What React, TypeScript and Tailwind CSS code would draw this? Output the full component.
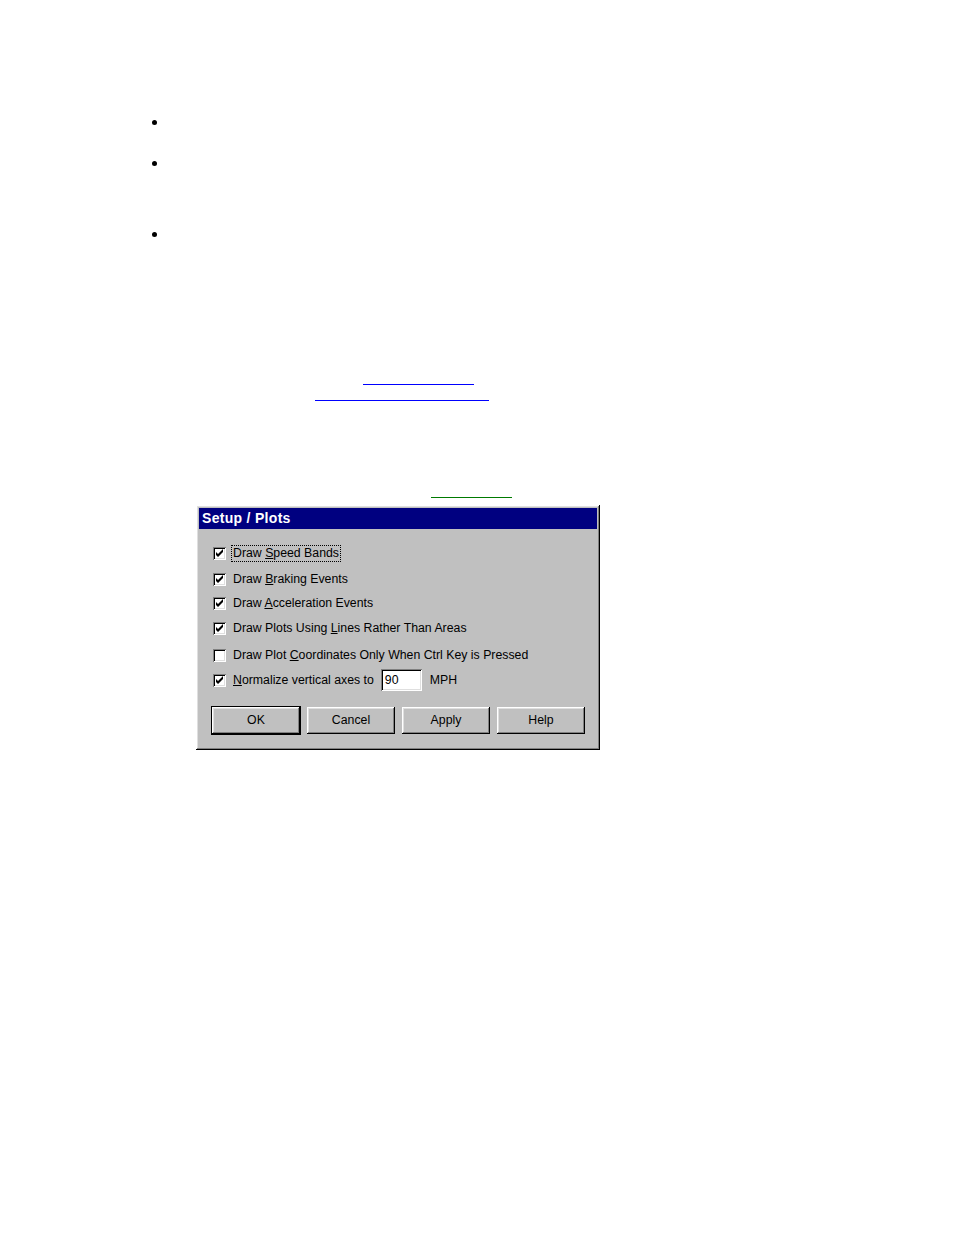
import React from "react";

const font = { fontFamily: '"Liberation Sans", Arial, sans-serif' };

const raised =
  "shadow-[inset_-1px_-1px_0_#000,inset_1px_1px_0_#fff,inset_-2px_-2px_0_#808080,inset_2px_2px_0_#dfdfdf]";
const sunken =
  "shadow-[inset_1px_1px_0_#808080,inset_-1px_-1px_0_#fff,inset_2px_2px_0_#000,inset_-2px_-2px_0_#dfdfdf]";

const Check = ({ checked }: { checked: boolean }) => (
  <div className={`w-[13px] h-[13px] bg-white shrink-0 relative ${sunken}`}>
    {checked && (
      <svg viewBox="0 0 13 13" className="absolute inset-0 w-[13px] h-[13px]">
        <path d="M3 5 L5 7 L10 2 L10 5 L5 10 L3 8 Z" fill="#000" />
      </svg>
    )}
  </div>
);

const Row = ({
  checked,
  mt,
  focus,
  children,
}: {
  checked: boolean;
  mt: string;
  focus?: boolean;
  children: React.ReactNode;
}) => (
  <div className={`flex items-center h-[20px] ${mt}`}>
    <Check checked={checked} />
    <span
      className={`ml-[6px] px-[1px] leading-[15px] ${
        focus ? "outline outline-1 outline-dotted outline-black" : ""
      }`}
    >
      {children}
    </span>
  </div>
);

const Button = ({ label, def }: { label: string; def?: boolean }) => (
  <div
    className={`w-[88px] h-[27px] flex items-center justify-center text-[12.3px] text-black ${raised} ${
      def ? "outline outline-1 outline-black" : ""
    }`}
  >
    {label}
  </div>
);

export default function App() {
  return (
    <div className="bg-white min-h-[1235px] w-[954px] text-black" style={font}>
      <div className="pt-[120px] pl-[152px]">
        <div className="w-[5px] h-[5px] rounded-full bg-black" />
        <div className="w-[5px] h-[5px] rounded-full bg-black mt-[36px]" />
        <div className="w-[5px] h-[5px] rounded-full bg-black mt-[66px]" />
      </div>

      <div className="mt-[147px]">
        <div className="ml-[363px] w-[111px] h-[1px] bg-[#0000ff]" />
        <div className="ml-[315px] w-[174px] h-[1px] bg-[#0000ff] mt-[15px]" />
        <div className="ml-[431px] w-[81px] h-[1px] bg-[#007a00] mt-[96px]" />
      </div>

      <div
        className={`ml-[196px] mt-[7px] w-[404px] h-[245px] bg-[#c0c0c0] p-[3px] ${raised}`}
      >
        <div className="h-[21px] bg-[#000080] text-white font-bold text-[14px] tracking-[0.3px] pl-[3px] flex items-center">
          Setup / Plots
        </div>
        <div className="pl-[14px] text-[12.3px]">
          <Row checked mt="mt-[14px]" focus>
            Draw <u>S</u>peed Bands
          </Row>
          <Row checked mt="mt-[6px]">
            Draw <u>B</u>raking Events
          </Row>
          <Row checked mt="mt-[4px]">
            Draw <u>A</u>cceleration Events
          </Row>
          <Row checked mt="mt-[5px]">
            Draw Plots Using <u>L</u>ines Rather Than Areas
          </Row>
          <Row checked={false} mt="mt-[7px]">
            Draw Plot <u>C</u>oordinates Only When Ctrl Key is Pressed
          </Row>
          <div className="flex items-center h-[22px] mt-[4px]">
            <Check checked />
            <span className="ml-[7px]">
              <u>N</u>ormalize vertical axes to
            </span>
            <div
              className={`ml-[7px] w-[41px] h-[22px] bg-white ${sunken} flex items-center pl-[4px]`}
            >
              90
            </div>
            <span className="ml-[8px]">MPH</span>
          </div>
          <div className="flex gap-[7px] mt-[16px] ml-[-1px]">
            <Button label="OK" def />
            <Button label="Cancel" />
            <Button label="Apply" />
            <Button label="Help" />
          </div>
        </div>
      </div>
    </div>
  );
}
